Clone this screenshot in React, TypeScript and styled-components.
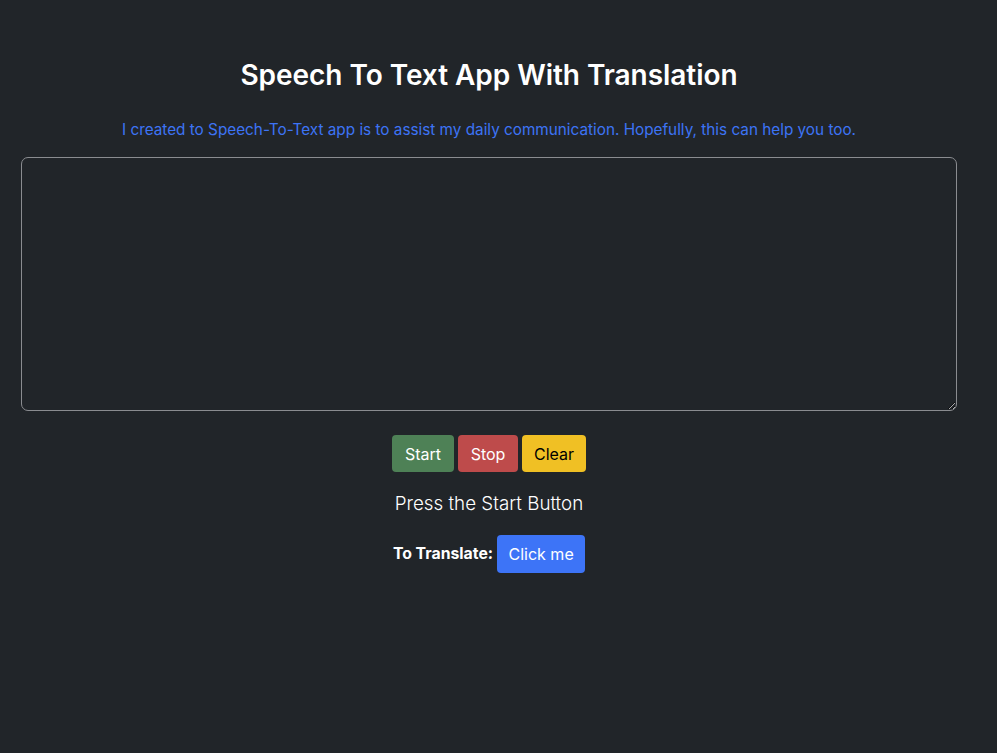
import React, { useState } from "react";
import styled, { createGlobalStyle } from "styled-components";

const GlobalStyle = createGlobalStyle`
  html, body {
    margin: 0;
    padding: 0;
    background-color: #212529;
    font-family: Inter, "Noto Sans", "Liberation Sans", sans-serif;
  }
`;

const Page = styled.div`
  width: 936px;
  min-height: 753px;
  padding: 0 21px;
  display: flex;
  flex-direction: column;
  align-items: center;
  color: #ffffff;
`;

const Title = styled.h1`
  margin: 57px 0 0;
  font-size: 28px;
  line-height: 36px;
  font-weight: 600;
  letter-spacing: -0.05px;
`;

const Intro = styled.p`
  margin: 26px 0 0;
  font-size: 15.3px;
  line-height: 22px;
  color: #3d74f5;
`;

const SpeechBox = styled.textarea`
  box-sizing: border-box;
  width: 100%;
  height: 254px;
  margin-top: 16px;
  background-color: transparent;
  border: 1px solid #8a8c90;
  border-radius: 7px;
  color: #ffffff;
  font-family: inherit;
  font-size: 16px;
  padding: 8px 12px;
  resize: vertical;
  outline: none;
`;

const ButtonRow = styled.div`
  display: flex;
  gap: 4px;
  margin-top: 24px;
`;

const ActionBtn = styled.button<{ $bg: string; $fg?: string; $w: number }>`
  width: ${(p) => p.$w}px;
  height: 37px;
  border: none;
  border-radius: 4px;
  background-color: ${(p) => p.$bg};
  color: ${(p) => p.$fg || "#ffffff"};
  font-family: inherit;
  font-size: 16px;
  cursor: pointer;
`;

const Status = styled.div`
  margin-top: 20px;
  font-size: 18.8px;
  line-height: 24px;
  font-weight: 300;
`;

const TranslateRow = styled.div`
  display: flex;
  align-items: center;
  gap: 4px;
  margin-top: 19px;
  font-size: 15.8px;
  font-weight: 700;
`;

const Label = styled.span`
  margin-bottom: 2px;
`;

const App: React.FC = () => {
  const [text, setText] = useState("");

  return (
    <>
      <GlobalStyle />
      <Page>
        <Title>Speech To Text App With Translation</Title>
        <Intro>
          I created to Speech-To-Text app is to assist my daily communication. Hopefully, this can help you too.
        </Intro>
        <SpeechBox value={text} onChange={(e) => setText(e.target.value)} />
        <ButtonRow>
          <ActionBtn $bg="#4e8156" $w={62}>Start</ActionBtn>
          <ActionBtn $bg="#be4b4b" $w={60}>Stop</ActionBtn>
          <ActionBtn $bg="#f0c024" $fg="#000000" $w={64} onClick={() => setText("")}>
            Clear
          </ActionBtn>
        </ButtonRow>
        <Status>Press the Start Button</Status>
        <TranslateRow>
          <Label>To Translate:</Label>
          <ActionBtn $bg="#3d74f7" $w={88} style={{ height: 38 }}>Click me</ActionBtn>
        </TranslateRow>
      </Page>
    </>
  );
};

export default App;
